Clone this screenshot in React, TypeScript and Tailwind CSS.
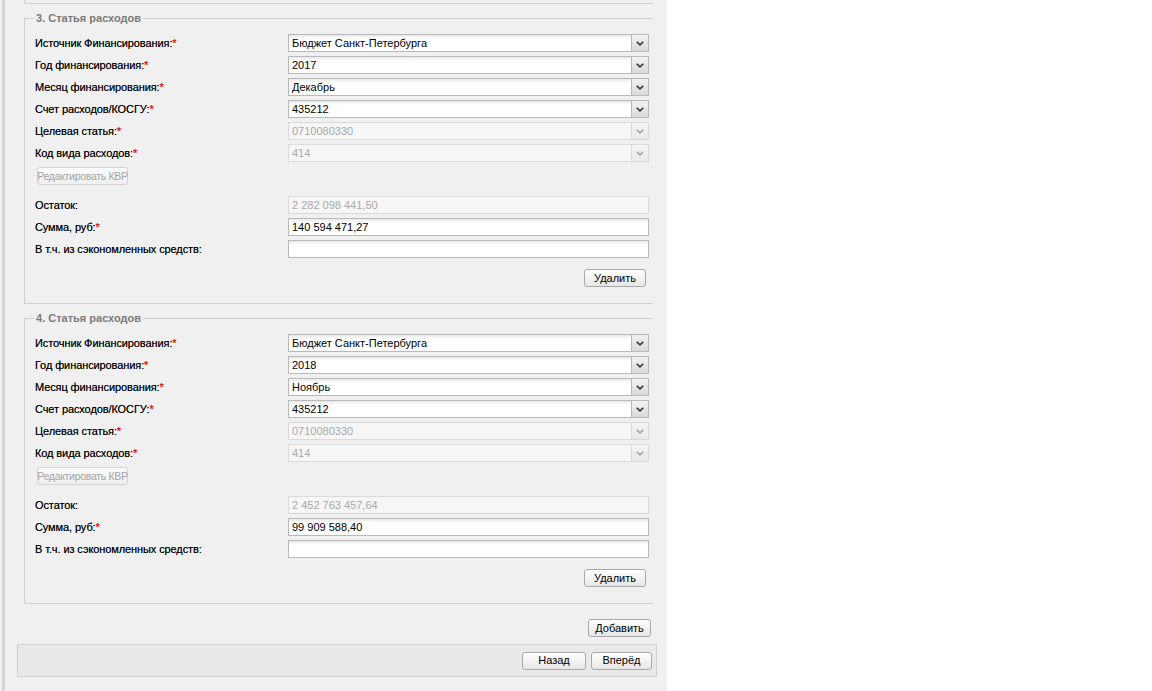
import React from 'react';

type Row = {
  label: string;
  value: string;
  required?: boolean;
  combo?: boolean;
  disabled?: boolean;
};

interface SectionProps {
  index: number;
  top: Row[];
  rest: Row[];
}

const Chevron: React.FC<{ disabled?: boolean }> = ({ disabled }) => (
  <svg width="8" height="5" viewBox="0 0 8 5" className={disabled ? 'opacity-40' : ''}>
    <path d="M0.8 0.8 L4 3.8 L7.2 0.8" fill="none" stroke="#3a3a3a" strokeWidth="1.6" />
  </svg>
);

const Field: React.FC<{ row: Row }> = ({ row }) => {
  const box = row.disabled
    ? 'border-[#dadada] bg-[#f6f6f6] text-[#a9a9a9]'
    : 'border-[#b9b9b9] bg-[linear-gradient(to_bottom,#e9e9e9,#ffffff_4px)] text-black';

  if (!row.combo) {
    return (
      <div className={`w-[361px] h-[18px] border px-[3px] flex items-center text-[11px] ${box}`}>
        {row.value}
      </div>
    );
  }

  return (
    <div className="w-[361px] h-[18px] flex">
      <div className={`flex-1 border px-[3px] flex items-center text-[11px] ${box}`}>{row.value}</div>
      <div
        className={`w-[17px] border border-l-0 flex items-center justify-center ${
          row.disabled
            ? 'border-[#dadada] bg-[linear-gradient(to_bottom,#f4f4f4,#e9e9e9)]'
            : 'border-[#b9b9b9] bg-[linear-gradient(to_bottom,#f2f2f2,#d9d9d9)]'
        }`}
      >
        <Chevron disabled={row.disabled} />
      </div>
    </div>
  );
};

const FormRow: React.FC<{ row: Row }> = ({ row }) => (
  <div className="flex items-center h-[18px] mb-[4px]">
    <div className="w-[253px] text-[11px] text-black leading-none tracking-[-0.1px] [text-shadow:0_0_0.4px_rgba(0,0,0,0.6)]">
      {row.label}
      {row.required && <span className="text-[#f00]">*</span>}
    </div>
    <Field row={row} />
  </div>
);

const Button: React.FC<{ label: string; width: string; disabled?: boolean }> = ({ label, width, disabled }) => (
  <button
    type="button"
    disabled={disabled}
    className={`${width} h-[18px] rounded-[3px] border leading-none whitespace-nowrap flex items-center justify-center ${
      disabled
        ? 'border-[#d2d2d2] bg-[linear-gradient(to_bottom,#fbfbfb,#efefef)] text-[#a5a5a5] text-[10.5px] tracking-[-0.3px]'
        : 'border-[#a9a9a9] bg-[linear-gradient(to_bottom,#ffffff,#e6e6e6)] text-black text-[11px] shadow-[inset_0_1px_0_#fff]'
    }`}
  >
    {label}
  </button>
);

const Section: React.FC<SectionProps> = ({ index, top, rest }) => (
  <fieldset className="mt-[8px] border border-r-0 border-[#cfcfcf] pl-[9px] pr-0 pt-[9px] pb-[16px] min-w-0">
    <legend className="px-[2px] text-[11px] font-bold text-[#7a7a7a] leading-[13px]">
      {index}. Статья расходов
    </legend>
    <div className="pl-[1px]">
      {top.map((r) => (
        <FormRow key={r.label} row={r} />
      ))}
      <div className="pt-[1px] pl-[2px]">
        <Button label="Редактировать КВР" width="w-[91px]" disabled />
      </div>
      <div className="mt-[11px]">
        {rest.map((r) => (
          <FormRow key={r.label} row={r} />
        ))}
      </div>
      <div className="w-[611px] flex justify-end mt-[11px]">
        <Button label="Удалить" width="w-[62px]" />
      </div>
    </div>
  </fieldset>
);

const makeTop = (year: string, month: string): Row[] => [
  { label: 'Источник Финансирования:', value: 'Бюджет Санкт-Петербурга', required: true, combo: true },
  { label: 'Год финансирования:', value: year, required: true, combo: true },
  { label: 'Месяц финансирования:', value: month, required: true, combo: true },
  { label: 'Счет расходов/КОСГУ:', value: '435212', required: true, combo: true },
  { label: 'Целевая статья:', value: '0710080330', required: true, combo: true, disabled: true },
  { label: 'Код вида расходов:', value: '414', required: true, combo: true, disabled: true },
];

const makeRest = (left: string, sum: string): Row[] => [
  { label: 'Остаток:', value: left, disabled: true },
  { label: 'Сумма, руб:', value: sum, required: true },
  { label: 'В т.ч. из сэкономленных средств:', value: '' },
];

export default function App() {
  return (
    <div className="min-h-screen bg-white font-['Liberation_Sans',Arial,sans-serif]">
      <div className="w-[667px] h-[691px] bg-[#f0f0f0] pl-[2px]">
        <div className="h-full border-l-[3px] border-[#d3d3d3] pl-[12px] pr-[10px]">
          <div className="ml-[7px] mr-[4px]">
            <div className="h-[4px] border-l border-b border-[#cfcfcf]" />
            <Section index={3} top={makeTop('2017', 'Декабрь')} rest={makeRest('2 282 098 441,50', '140 594 471,27')} />
            <Section index={4} top={makeTop('2018', 'Ноябрь')} rest={makeRest('2 452 763 457,64', '99 909 588,40')} />
            <div className="flex justify-end mt-[15px] pr-[2px]">
              <Button label="Добавить" width="w-[63px]" />
            </div>
          </div>
          <div className="mt-[7px] h-[33px] border border-[#d0d0d0] bg-[#e9e9e9] flex items-center justify-end gap-[5px] pr-[4px]">
            <Button label="Назад" width="w-[64px]" />
            <Button label="Вперёд" width="w-[61px]" />
          </div>
        </div>
      </div>
    </div>
  );
}
